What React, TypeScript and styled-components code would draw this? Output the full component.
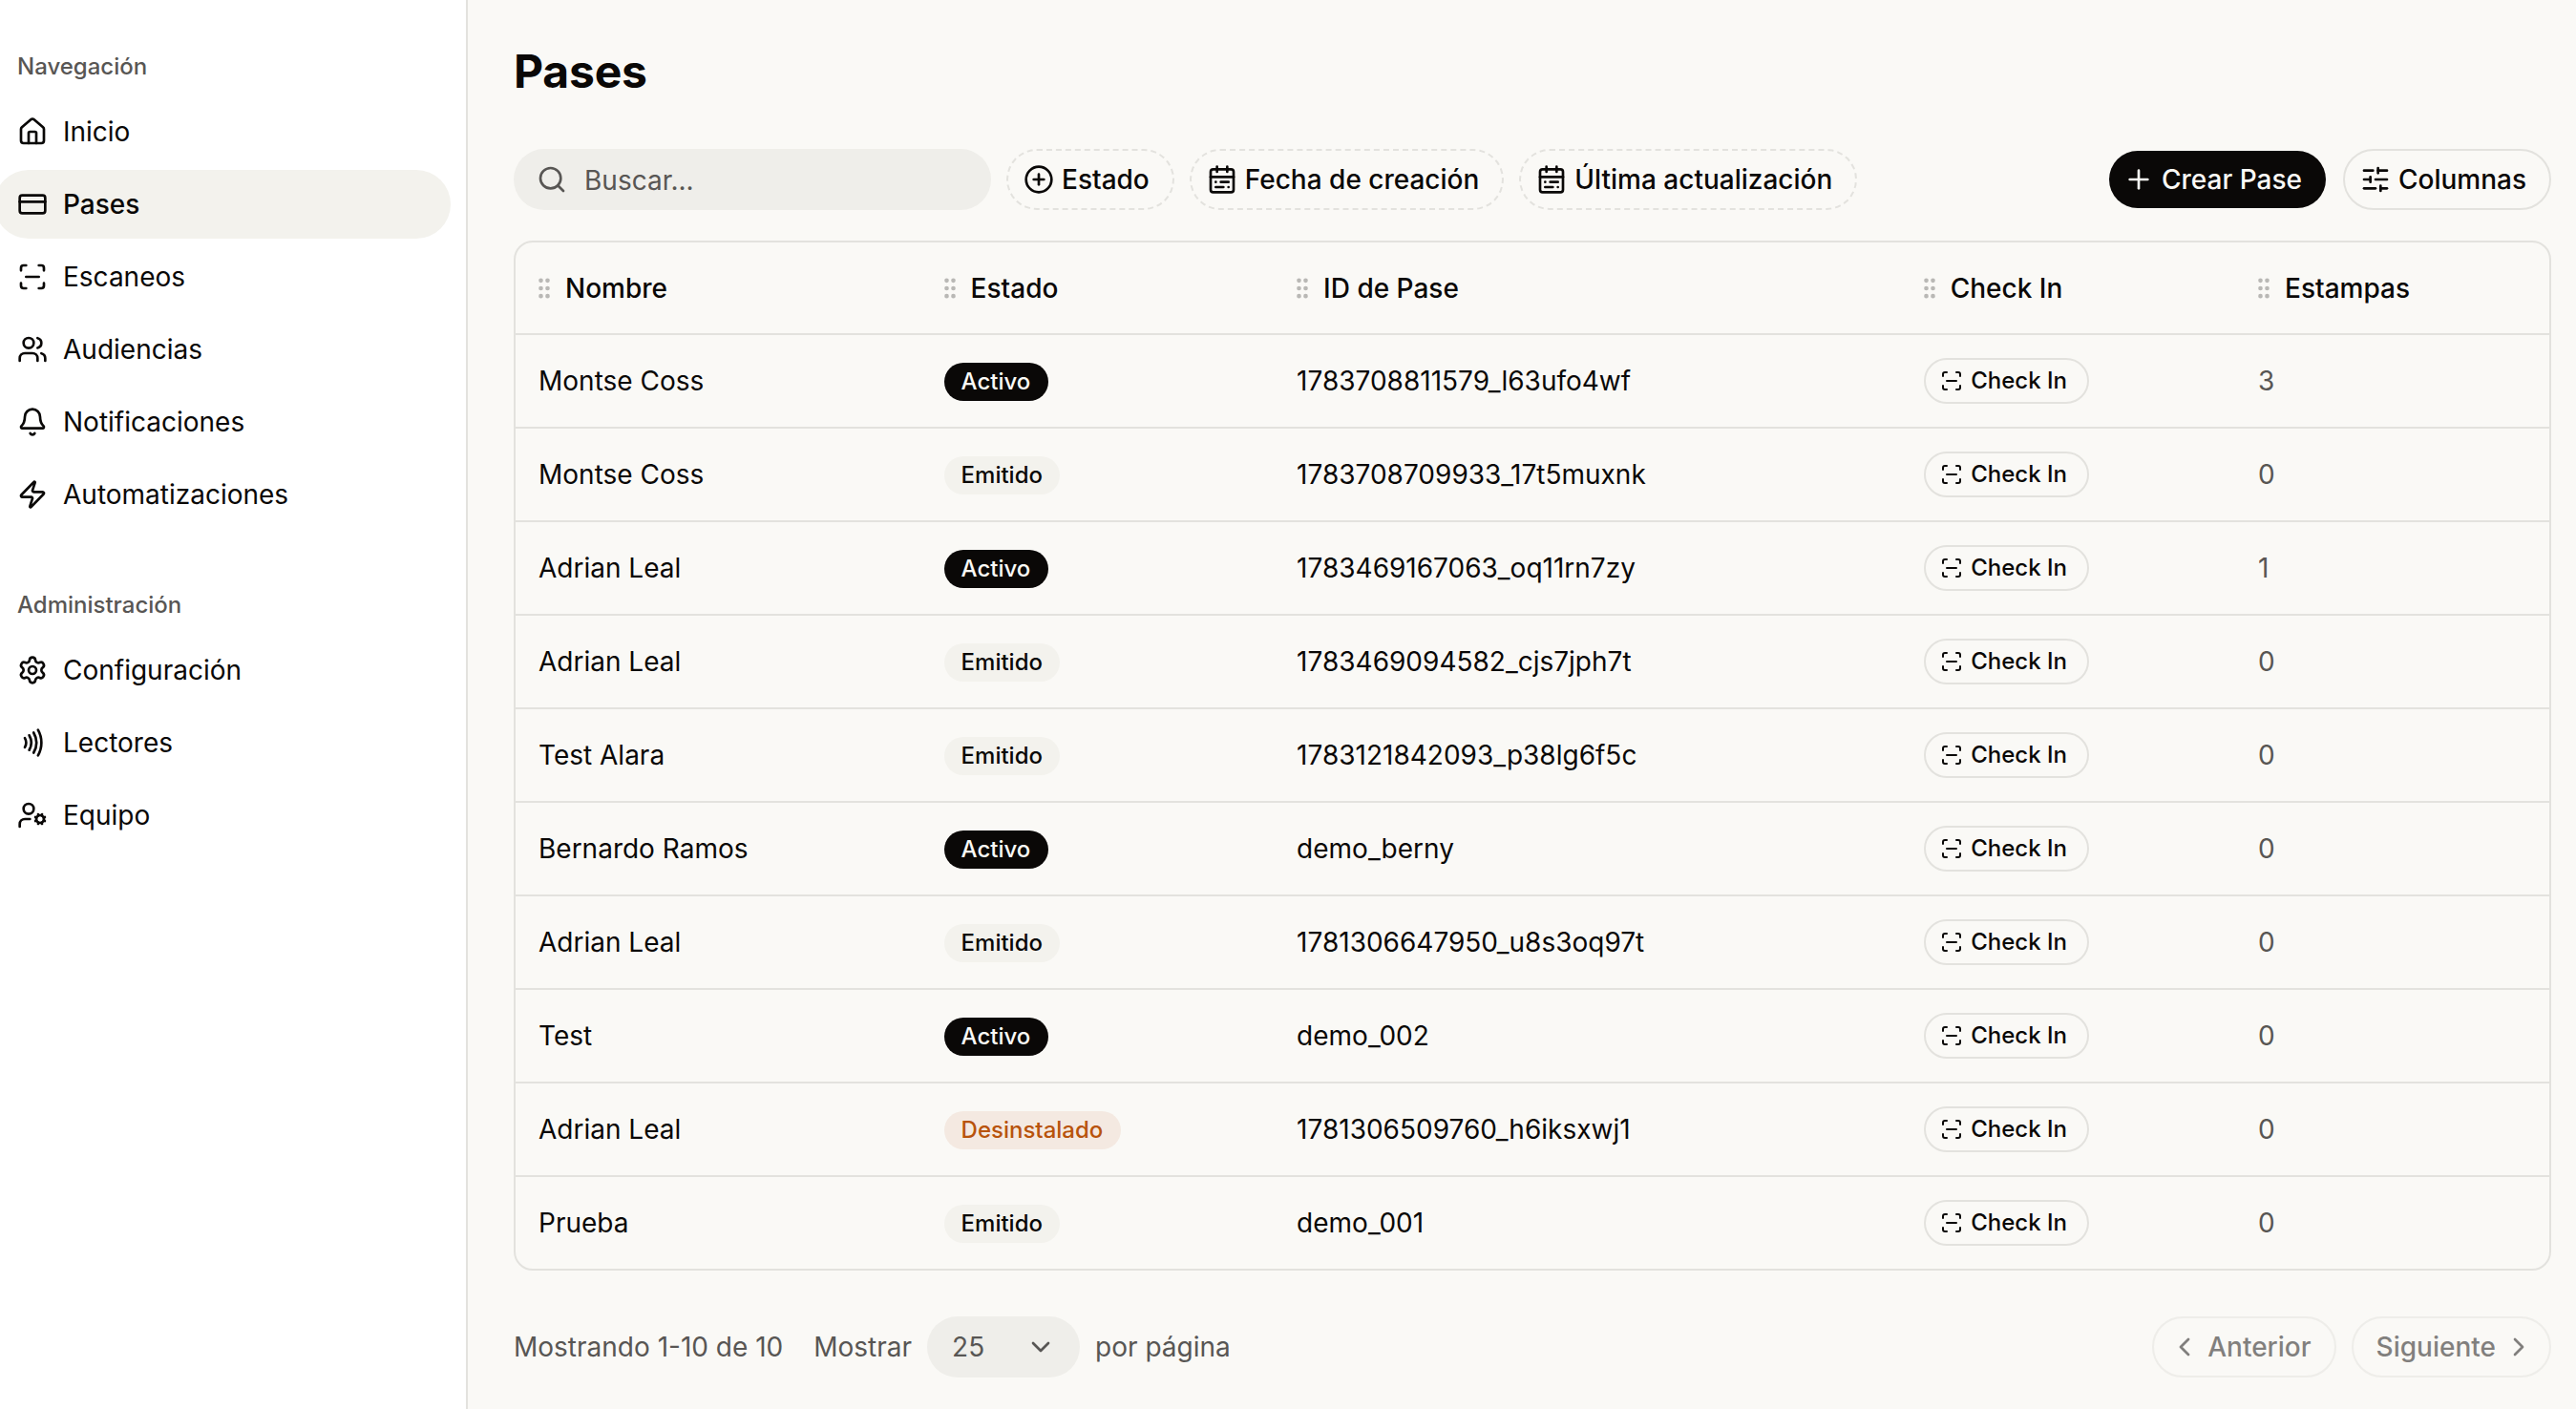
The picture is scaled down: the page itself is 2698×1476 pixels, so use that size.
import React from 'react';
import styled, {createGlobalStyle} from 'styled-components';
import {
    Bell,
    CalendarRange,
    ChevronDown,
    ChevronLeft,
    ChevronRight,
    CirclePlus,
    CreditCard,
    GripVertical,
    House,
    Nfc,
    Plus,
    ScanLine,
    Search,
    Settings,
    SlidersHorizontal,
    UserCog,
    Users,
    Zap,
} from 'lucide-react';

const colors = {
    text: '#0a0807',
    muted: '#585654',
    page: '#faf9f6',
    accent: '#f3f2ed',
    field: '#efeeea',
    border: '#e3e2de',
}

const mainNav = [
    {title: 'Inicio', icon: House},
    {title: 'Pases', icon: CreditCard, active: true},
    {title: 'Escaneos', icon: ScanLine},
    {title: 'Audiencias', icon: Users},
    {title: 'Notificaciones', icon: Bell},
    {title: 'Automatizaciones', icon: Zap},
]

const adminNav = [
    {title: 'Configuración', icon: Settings},
    {title: 'Lectores', icon: Nfc},
    {title: 'Equipo', icon: UserCog},
]

const filters = [
    {title: 'Estado', icon: CirclePlus},
    {title: 'Fecha de creación', icon: CalendarRange},
    {title: 'Última actualización', icon: CalendarRange},
]

const columns = ['Nombre', 'Estado', 'ID de Pase', 'Check In', 'Estampas']

type Status = 'Activo' | 'Emitido' | 'Desinstalado'

const passes: { name: string, status: Status, id: string, stamps: number }[] = [
    {name: 'Montse Coss', status: 'Activo', id: '1783708811579_l63ufo4wf', stamps: 3},
    {name: 'Montse Coss', status: 'Emitido', id: '1783708709933_17t5muxnk', stamps: 0},
    {name: 'Adrian Leal', status: 'Activo', id: '1783469167063_oq11rn7zy', stamps: 1},
    {name: 'Adrian Leal', status: 'Emitido', id: '1783469094582_cjs7jph7t', stamps: 0},
    {name: 'Test Alara', status: 'Emitido', id: '1783121842093_p38lg6f5c', stamps: 0},
    {name: 'Bernardo Ramos', status: 'Activo', id: 'demo_berny', stamps: 0},
    {name: 'Adrian Leal', status: 'Emitido', id: '1781306647950_u8s3oq97t', stamps: 0},
    {name: 'Test', status: 'Activo', id: 'demo_002', stamps: 0},
    {name: 'Adrian Leal', status: 'Desinstalado', id: '1781306509760_h6iksxwj1', stamps: 0},
    {name: 'Prueba', status: 'Emitido', id: 'demo_001', stamps: 0},
]

const NavGroup = ({label, items}: { label: string, items: { title: string, icon: any, active?: boolean }[] }) => (
    <Group>
        <GroupLabel>{label}</GroupLabel>
        <NavList>
            {items.map(({title, icon: Icon, active}) => (
                <NavItem key={title} $active={active}>
                    <Icon size={32}/>
                    {title}
                </NavItem>
            ))}
        </NavList>
    </Group>
)

const App = () => {
    return (
        <>
            <GlobalStyle/>
            <Layout>
                <Sidebar>
                    <NavGroup label='Navegación' items={mainNav}/>
                    <NavGroup label='Administración' items={adminNav}/>
                </Sidebar>
                <Main>
                    <Title>Pases</Title>
                    <Toolbar>
                        <SearchField>
                            <Search size={32}/>
                            <Placeholder>Buscar...</Placeholder>
                        </SearchField>
                        {filters.map(({title, icon: Icon}) => (
                            <FilterButton key={title}>
                                <Icon size={32}/>
                                {title}
                            </FilterButton>
                        ))}
                        <Actions>
                            <CreateButton>
                                <Plus size={32}/>
                                Crear Pase
                            </CreateButton>
                            <ColumnsButton>
                                <SlidersHorizontal size={32}/>
                                Columnas
                            </ColumnsButton>
                        </Actions>
                    </Toolbar>
                    <Table>
                        <HeadRow>
                            {columns.map((c) => (
                                <HeadCell key={c}>
                                    <GripVertical size={28}/>
                                    {c}
                                </HeadCell>
                            ))}
                        </HeadRow>
                        {passes.map((p, i) => (
                            <Row key={i}>
                                <Cell>{p.name}</Cell>
                                <Cell><Badge $status={p.status}>{p.status}</Badge></Cell>
                                <Cell>{p.id}</Cell>
                                <Cell>
                                    <CheckInButton>
                                        <ScanLine size={24}/>
                                        Check In
                                    </CheckInButton>
                                </Cell>
                                <Cell $muted>{p.stamps}</Cell>
                            </Row>
                        ))}
                    </Table>
                    <Footer>
                        <Summary>Mostrando 1-10 de 10</Summary>
                        <PageSize>
                            Mostrar
                            <Select>
                                25
                                <ChevronDown size={32}/>
                            </Select>
                            por página
                        </PageSize>
                        <Pager>
                            <PagerButton><ChevronLeft size={32}/>Anterior</PagerButton>
                            <PagerButton>Siguiente<ChevronRight size={32}/></PagerButton>
                        </Pager>
                    </Footer>
                </Main>
            </Layout>
        </>
    );
};

export default App;

const GlobalStyle = createGlobalStyle`
    * {
        box-sizing: border-box;
    }

    body {
        margin: 0;
        background-color: ${colors.page};
        color: ${colors.text};
        font-family: Inter, "Liberation Sans", sans-serif;
        font-size: 28px;
        line-height: 40px;
        -webkit-font-smoothing: antialiased;
    }

    svg {
        flex-shrink: 0;
    }
`
const Layout = styled.div`
    display: flex;
    height: 1476px;
    overflow: hidden;
`
const Sidebar = styled.aside`
    width: 490px;
    flex-shrink: 0;
    padding: 38px 0 0;
    background-color: #fff;
    border-right: 2px solid ${colors.border};
`
const Group = styled.nav`
    margin-bottom: 48px;
`
const GroupLabel = styled.div`
    height: 64px;
    padding-left: 18px;
    color: ${colors.muted};
    font-size: 24px;
    font-weight: 500;
    line-height: 64px;
`
const NavList = styled.ul`
    display: flex;
    flex-direction: column;
    gap: 4px;
    margin: 0;
    padding: 0;
    list-style: none;
`
const NavItem = styled.li<{ $active?: boolean }>`
    display: flex;
    align-items: center;
    gap: 16px;
    width: 478px;
    height: 72px;
    margin-left: -6px;
    padding-left: 24px;
    border-radius: 36px;
    background-color: ${({$active}) => $active ? colors.accent : 'transparent'};
    font-weight: ${({$active}) => $active ? 500 : 400};
`
const Main = styled.main`
    flex: 1;
    min-width: 0;
    padding: 43px 26px 0 48px;
`
const Title = styled.h1`
    margin: 0 0 49px;
    font-size: 48px;
    font-weight: 700;
    line-height: 64px;
    letter-spacing: -0.2px;
`
const Toolbar = styled.div`
    display: flex;
    align-items: center;
    gap: 16px;
    margin-bottom: 32px;
`
const SearchField = styled.div`
    display: flex;
    align-items: center;
    gap: 18px;
    width: 500px;
    height: 64px;
    padding: 0 24px;
    border-radius: 32px;
    background-color: ${colors.field};
    color: ${colors.muted};
`
const Placeholder = styled.span`
    padding-top: 2px;
`
const Button = styled.button`
    display: flex;
    align-items: center;
    height: 64px;
    border: 2px solid ${colors.border};
    border-radius: 32px;
    background-color: transparent;
    color: ${colors.text};
    font: inherit;
    font-weight: 500;
    white-space: nowrap;
`
const FilterButton = styled(Button)`
    gap: 8px;
    padding: 0 24px 0 16px;
    border-style: dashed;
`
const Actions = styled.div`
    display: flex;
    align-items: center;
    gap: 18px;
    margin-left: auto;
`
const CreateButton = styled(Button)`
    gap: 8px;
    height: 60px;
    padding: 0 25px 0 15px;
    border: none;
    background-color: ${colors.text};
    color: ${colors.page};
`
const ColumnsButton = styled(Button)`
    gap: 8px;
    padding: 0 24px 0 16px;
`
const Table = styled.div`
    border: 2px solid ${colors.border};
    border-radius: 20px;
`
const Row = styled.div`
    display: grid;
    grid-template-columns: 424.6px 369.5px 656.6px 350.4px 1fr;
    align-items: center;
    height: 98px;
    border-bottom: 2px solid ${colors.border};

    &:last-child {
        height: 96px;
        border-bottom: none;
    }
`
const HeadRow = styled(Row)`
    height: 97px;
`
const Cell = styled.div<{ $muted?: boolean }>`
    padding-left: 24px;
    color: ${({$muted}) => $muted ? colors.muted : colors.text};
`
const HeadCell = styled.div`
    display: flex;
    align-items: center;
    gap: 8px;
    padding-left: 16px;
    font-weight: 500;

    svg {
        color: #b9b8b5;
        fill: #b9b8b5;
    }
`
const badgeStyles = {
    Activo: {background: colors.text, color: colors.page},
    Emitido: {background: colors.accent, color: colors.text},
    Desinstalado: {background: '#f4e9e1', color: '#b8530b'},
}
const Badge = styled.span<{ $status: Status }>`
    display: inline-flex;
    align-items: center;
    height: 40px;
    padding: 0 18.5px 0 18px;
    border-radius: 20px;
    background-color: ${({$status}) => badgeStyles[$status].background};
    color: ${({$status}) => badgeStyles[$status].color};
    font-size: 24px;
    font-weight: 500;
    vertical-align: middle;
`
const CheckInButton = styled(Button)`
    gap: 8px;
    height: 48px;
    padding: 0 21px 0 15.5px;
    font-size: 24px;
`
const Footer = styled.footer`
    display: flex;
    align-items: center;
    margin-top: 48px;
    color: ${colors.muted};
`
const Summary = styled.span`
    margin-right: 32px;
`
const PageSize = styled.div`
    display: flex;
    align-items: center;
    gap: 16px;
`
const Select = styled.div`
    display: flex;
    align-items: center;
    justify-content: space-between;
    width: 160px;
    height: 64px;
    padding: 0 25px 0 26px;
    border-radius: 32px;
    background-color: ${colors.field};
`
const Pager = styled.div`
    display: flex;
    gap: 16px;
    margin-left: auto;
`
const PagerButton = styled(Button)`
    gap: 8px;
    padding: 0 24px 0 16px;
    opacity: 0.5;

    &:last-child {
        padding: 0 16px 0 24px;
    }
`
